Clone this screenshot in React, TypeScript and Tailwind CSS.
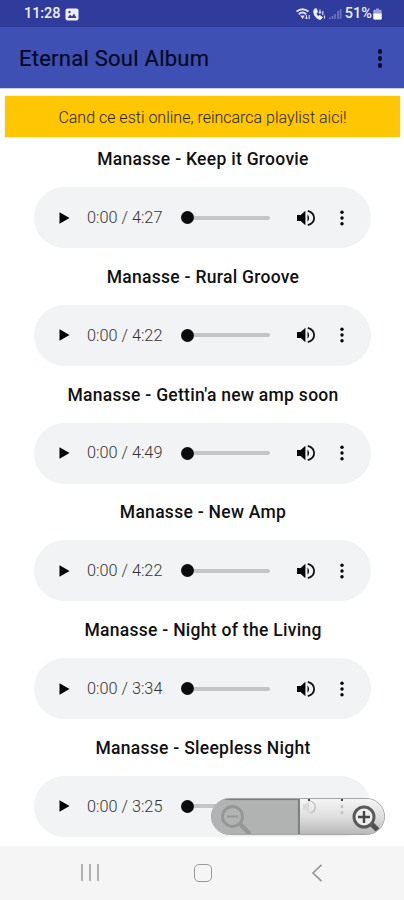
interface Track {
  title: string;
  duration: string;
}

const tracks: Track[] = [
  { title: "Manasse - Keep it Groovie", duration: "4:27" },
  { title: "Manasse - Rural Groove", duration: "4:22" },
  { title: "Manasse - Gettin'a new amp soon", duration: "4:49" },
  { title: "Manasse - New Amp", duration: "4:22" },
  { title: "Manasse - Night of the Living", duration: "3:34" },
  { title: "Manasse - Sleepless Night", duration: "3:25" },
];

function StatusBar() {
  return (
    <div className="h-[27px] shrink-0 bg-[#303c9c] flex items-center justify-between pl-[24px] pr-[22px] pt-px text-[#eef0ff]">
      <div className="flex items-center gap-[5px]">
        <span className="text-[14.5px] leading-none font-medium tracking-[-0.1px]">11:28</span>
        <svg width="14" height="13" viewBox="0 0 14 13">
          <rect x="0.5" y="0.5" width="13" height="12" rx="2" fill="#eef0ff" />
          <path d="M2.5 10 5 6.5 7 8.5 9 5.5 11.5 10Z" fill="#303c9c" />
          <circle cx="4.5" cy="4" r="1.2" fill="#303c9c" />
        </svg>
      </div>
      <div className="flex items-center">
        <svg width="49" height="14" viewBox="0 0 49 14" fill="none" stroke="#dfe3fb">
          <path d="M0.5 4.6Q6.5 -0.2 12.5 4.6M2.8 7.2Q6.5 4 10.2 7.2" strokeWidth="1.9" />
          <path d="M4.2 8.6H8.8L6.6 12Z" fill="#dfe3fb" stroke="none" />
          <path d="M10.5 8V12M9 10.5 10.5 12 12 10.5M13.2 12V8" strokeWidth="1" />
          <path d="M18.5 2C16.3 6 19.5 12 24.5 12.5L26.5 10.4 23.7 8.4 22.3 9.3C20.9 8.5 20.2 7.3 20.2 6L21.5 5.2 20.5 1.8Z" fill="#f3f5ff" strokeWidth="1" />
          <path d="M24 2.5V6M22.8 5 24 6.3 25.2 5M26.8 8V4M28.5 11.5V8.5" strokeWidth="1.1" />
          <path d="M34 12V10.5M36.5 12V9M39 12V7M42 12V4M44.6 12V2" stroke="#6973c0" strokeWidth="1.8" />
        </svg>
        <span className="text-[14.5px] leading-none font-medium">51%</span>
        <svg className="ml-[1px]" width="9" height="12" viewBox="0 0 9 13">
          <path d="M3 0.5H6V2H8Q9 2 9 3V11.5Q9 12.5 8 12.5H1Q0 12.5 0 11.5V3Q0 2 1 2H3Z" fill="#9aa2dc" />
          <path d="M0 6H9V11.5Q9 12.5 8 12.5H1Q0 12.5 0 11.5Z" fill="#fff" />
        </svg>
      </div>
    </div>
  );
}

function Header() {
  return (
    <header className="h-[61px] shrink-0 bg-[#3f50b5] flex items-center justify-between pl-[19px] pr-[22px] pt-[2px]">
      <h1 className="text-[22px] leading-none font-normal tracking-[0.25px] text-[#060a20] [-webkit-text-stroke:0.2px_#060a20]">
        Eternal Soul Album
      </h1>
      <div className="flex flex-col gap-[2.5px]">
        <span className="size-[4.5px] rounded-full bg-[#080b20]" />
        <span className="size-[4.5px] rounded-full bg-[#080b20]" />
        <span className="size-[4.5px] rounded-full bg-[#080b20]" />
      </div>
    </header>
  );
}

function Player({ track }: { track: Track }) {
  return (
    <section className="h-[117.8px] shrink-0">
      <h2 className="h-[36px] pl-[2px] leading-[36px] text-center text-[17.5px] font-medium tracking-[0.28px] text-[#111] whitespace-nowrap">
        {track.title}
      </h2>
      <div className="mt-[10px] ml-[34px] w-[337px] h-[61px] rounded-full bg-[#f1f3f4] flex items-center">
        <svg className="ml-[25px] shrink-0" width="11" height="12" viewBox="0 0 11 12">
          <path d="M0.5 0.3V11.7L10.5 6Z" fill="#000" />
        </svg>
        <span className="ml-[17px] w-[76px] shrink-0 pt-px text-[16.3px] leading-none font-light text-[#333] whitespace-nowrap">
          0:00 / {track.duration}
        </span>
        <div className="ml-[18px] w-[89px] shrink-0 flex items-center">
          <span className="size-[13px] shrink-0 rounded-full bg-[#0c0c0e]" />
          <span className="h-[4px] flex-1 rounded-r-full bg-[#c4c5c6]" />
        </div>
        <svg className="ml-[27px] shrink-0" width="18" height="18" viewBox="0 0 18 18">
          <path d="M0 6V12H3.7L8.4 16.2V1.8L3.7 6Z" fill="#000" />
          <path d="M10.5 5.2Q13.6 9 10.5 12.8Z" fill="#000" />
          <path d="M10.8 1.8C19.2 4.4 19.2 13.6 10.8 16.2" fill="none" stroke="#111" strokeWidth="1.8" />
        </svg>
        <svg className="ml-[25px] shrink-0" width="4" height="16" viewBox="0 0 4 16">
          <circle cx="2" cy="2.3" r="1.7" />
          <circle cx="2" cy="8" r="1.7" />
          <circle cx="2" cy="13.7" r="1.7" />
        </svg>
      </div>
    </section>
  );
}

function ZoomControls() {
  return (
    <div className="absolute left-[211px] top-[798px] w-[174px] h-[37px] rounded-full overflow-hidden flex border border-[#a5a5a5] bg-[#dedede]">
      <div className="w-[88px] h-full bg-[#b0b3b2] border-r-2 border-[#808080] shadow-[inset_0_1px_1px_#777]">
        <svg width="60" height="36" viewBox="0 0 60 36" fill="none" stroke="#949796">
          <circle cx="20.5" cy="17.5" r="10" strokeWidth="2.8" />
          <path d="M15 17.5H26" strokeWidth="2.2" />
          <path d="M28 25 38 35" strokeWidth="4.5" />
        </svg>
      </div>
      <div className="flex-1 h-full bg-linear-to-b from-[#f5f5f5] via-[#dfdfdf] to-[#b9b9b9]">
        <svg width="84" height="36" viewBox="0 0 84 36" fill="none">
          <path d="M3 5V11H6L9 14V2L6 5Z" fill="#dadada" />
          <path d="M10 2C17 4 17 12 10 14" stroke="#bcbcbc" strokeWidth="1.3" />
          <path d="M9 0V2M42 0V2" stroke="#444" strokeWidth="2" />
          <path d="M42 6V9M42 12V15" stroke="#c3c3c3" strokeWidth="2.4" />
          <path d="M71.5 25 79 32.5" stroke="#4e4e4e" strokeWidth="5" />
          <circle cx="64" cy="18" r="10" fill="#eee" stroke="#5a5a5a" strokeWidth="3" />
          <path d="M58 18H70M64 12V24" stroke="#454545" strokeWidth="2.4" />
        </svg>
      </div>
    </div>
  );
}

function NavBar() {
  return (
    <nav className="h-[54px] shrink-0 bg-[#f5f5f5] flex items-center pl-[81px] pb-px">
      <div className="w-[18px] h-[17px] flex justify-between">
        <span className="w-[2px] bg-[#b0b0b0]" />
        <span className="w-[2px] bg-[#b0b0b0]" />
        <span className="w-[2px] bg-[#b0b0b0]" />
      </div>
      <span className="ml-[95px] w-[18px] h-[18px] rounded-[5px] border-[1.5px] border-[#999]" />
      <svg className="ml-[99px]" width="12" height="18" viewBox="0 0 12 18" fill="none" stroke="#989898" strokeWidth="1.7">
        <path d="M10.5 0.8 2 9 10.5 17.2" />
      </svg>
    </nav>
  );
}

export default function App() {
  return (
    <div className="relative w-[404px] h-[900px] overflow-hidden flex flex-col bg-white font-['Roboto',sans-serif]">
      <StatusBar />
      <Header />
      <main className="flex-1 min-h-0 overflow-hidden flex flex-col border-t border-[#c9cdea]">
        <div className="mt-[7px] ml-[5px] w-[395px] h-[41px] shrink-0 mb-[4px] bg-[#ffc703] shadow-[0_0_2px_#e5d9a8] flex items-center justify-center pt-[2px] text-[16px] font-light text-[#2a2308] whitespace-nowrap">
          Cand ce esti online, reincarca playlist aici!
        </div>
        {tracks.map((track) => (
          <Player key={track.title} track={track} />
        ))}
      </main>
      <NavBar />
      <ZoomControls />
    </div>
  );
}
